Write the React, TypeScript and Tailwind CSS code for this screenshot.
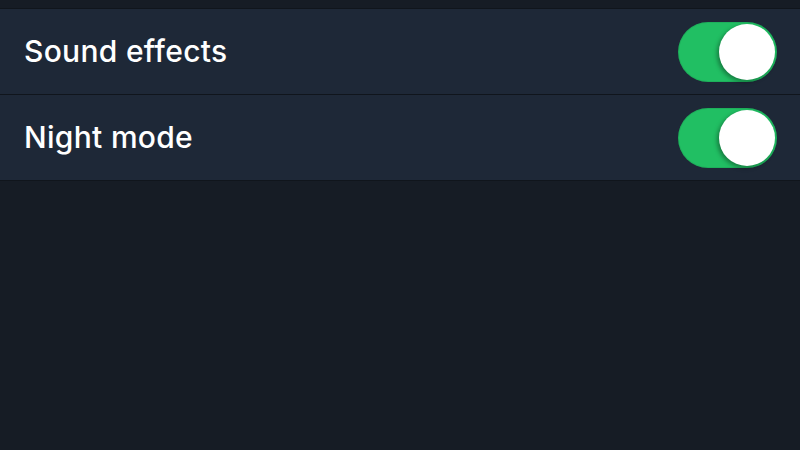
import React from "react";

function Toggle() {
  return (
    <div className="relative h-[60px] w-[99px] rounded-full bg-[#21bf63] shadow-[inset_0_0_0_1px_rgba(0,0,0,0.08)]">
      <div className="absolute right-[2px] top-[2px] h-[56px] w-[56px] rounded-full bg-white shadow-[-2px_2px_4px_rgba(0,0,0,0.35)]" />
    </div>
  );
}

const rows = ["Sound effects", "Night mode"];

export default function App() {
  return (
    <div
      className="flex h-[450px] w-[800px] flex-col bg-[#161c25]"
      style={{ fontFamily: "Inter, 'Liberation Sans', sans-serif" }}
    >
      <div className="h-[9px] border-b border-[#10151c]" />
      {rows.map((label) => (
        <div
          key={label}
          className="flex h-[86px] items-center justify-between border-b border-[#10151c] bg-[#1e2837] pl-[24px] pr-[23px]"
        >
          <span className="text-[30px] font-medium tracking-[0.3px] text-white">
            {label}
          </span>
          <Toggle />
        </div>
      ))}
    </div>
  );
}
